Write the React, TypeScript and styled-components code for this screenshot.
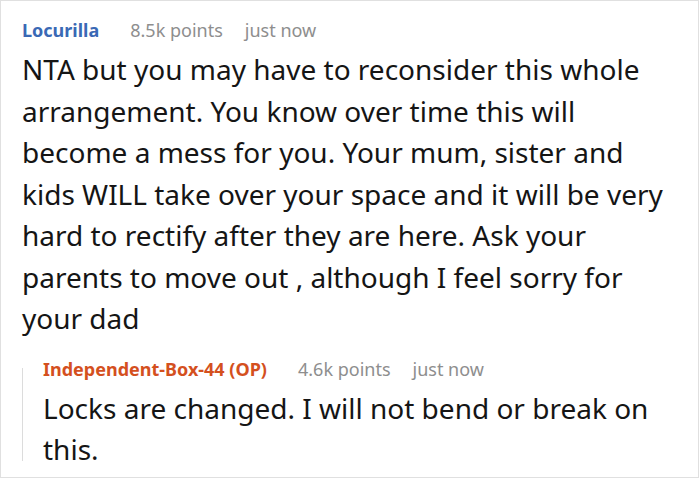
import React from "react";
import styled, { createGlobalStyle } from "styled-components";

const Global = createGlobalStyle`
  html, body { margin: 0; padding: 0; background: #ffffff; }
  body { font-family: "Noto Sans", "Open Sans", sans-serif; }
`;

const Card = styled.div`
  box-sizing: border-box;
  width: 699px;
  height: 478px;
  border: 1px solid #e0e0e0;
  background: #ffffff;
  padding: 11px 21px 0 21px;
`;

const Meta = styled.div`
  display: flex;
  align-items: baseline;
  font-size: 18px;
  line-height: 36px;
  margin-bottom: 1px;
`;

const Author = styled.span<{ $color: string }>`
  font-weight: 700;
  color: ${(p) => p.$color};
  margin-right: 31px;
`;

const Points = styled.span`
  color: #8e8e8e;
  margin-right: 22px;
`;

const Time = styled.span`
  color: #8e8e8e;
`;

const Body = styled.p`
  margin: 0;
  font-size: 28px;
  line-height: 41.5px;
  color: #151515;
`;

const Reply = styled.div`
  position: relative;
  margin-top: 11px;
  padding-left: 21px;

  &::before {
    content: "";
    position: absolute;
    left: 0;
    top: 17px;
    bottom: 10px;
    width: 1px;
    background: #dcdcdc;
  }
`;

const Comment = ({
  author,
  color,
  points,
  time,
  text,
}: {
  author: string;
  color: string;
  points: string;
  time: string;
  text: string;
}) => (
  <>
    <Meta>
      <Author $color={color}>{author}</Author>
      <Points>{points}</Points>
      <Time>{time}</Time>
    </Meta>
    <Body>{text}</Body>
  </>
);

export default function App() {
  return (
    <>
      <Global />
      <Card>
        <Comment
          author="Locurilla"
          color="#3a69b5"
          points="8.5k points"
          time="just now"
          text="NTA but you may have to reconsider this whole arrangement. You know over time this will become a mess for you. Your mum, sister and kids WILL take over your space and it will be very hard to rectify after they are here. Ask your parents to move out , although I feel sorry for your dad"
        />
        <Reply>
          <Comment
            author="Independent-Box-44 (OP)"
            color="#d4501e"
            points="4.6k points"
            time="just now"
            text="Locks are changed. I will not bend or break on this."
          />
        </Reply>
      </Card>
    </>
  );
}
